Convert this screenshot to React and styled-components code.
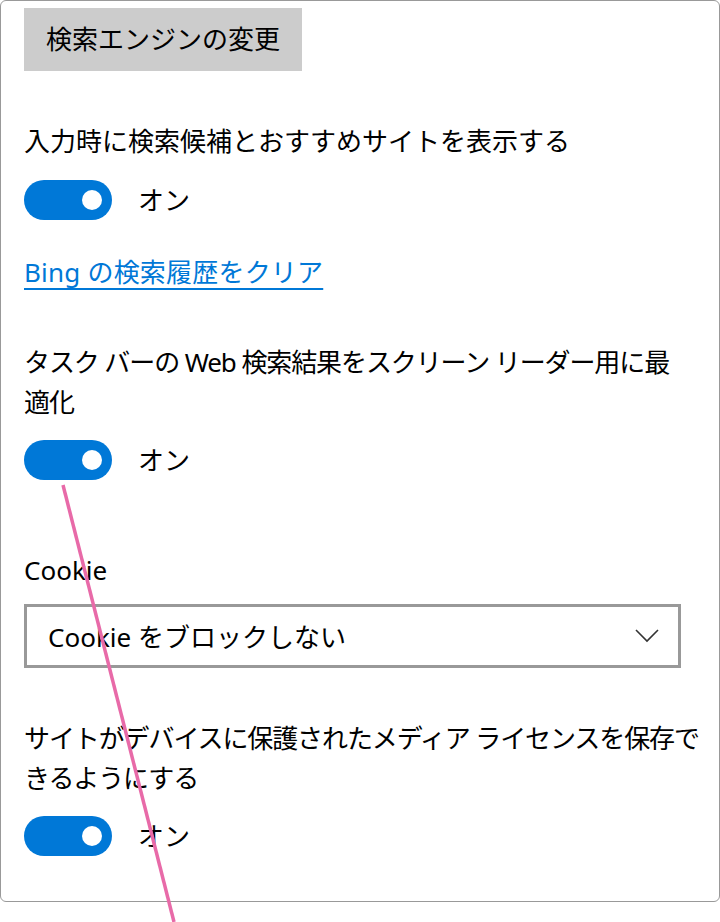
import React from "react";
import styled, { createGlobalStyle } from "styled-components";

const GlobalStyle = createGlobalStyle`
  html, body {
    margin: 0;
    padding: 0;
    background: #fff;
  }
  body {
    font-family: "Noto Sans", "Noto Sans CJK JP", sans-serif;
    color: #000;
  }
`;

const Page = styled.div`
  position: relative;
  width: 720px;
  height: 922px;
  overflow: hidden;
`;

const Panel = styled.div`
  box-sizing: border-box;
  width: 720px;
  height: 902px;
  border: 1px solid #999;
  border-radius: 6px;
  padding: 7px 0 0 23px;
  display: flex;
  flex-direction: column;
  align-items: flex-start;
`;

const GrayButton = styled.button`
  height: 63px;
  padding: 0 22px;
  border: none;
  background: #ccc;
  font-family: "Noto Sans", "Noto Sans CJK JP", sans-serif;
  font-size: 26px;
  color: #000;
  line-height: 63px;
`;

// labels keep the line breaks of the original settings page
const Label = styled.div`
  margin-top: ${(p) => p.$gap}px;
  font-size: 26px;
  line-height: 40px;
  white-space: nowrap;
  letter-spacing: ${(p) => (p.$tight ? "-1.1px" : "0")};
`;

const ToggleRow = styled.div`
  margin-top: ${(p) => p.$gap || 18}px;
  display: flex;
  align-items: center;
  gap: 26px;
  height: 40px;
`;

const Track = styled.div`
  position: relative;
  width: 88px;
  height: 40px;
  border-radius: 20px;
  background: #0078d7;
`;

const Knob = styled.span`
  position: absolute;
  top: 10px;
  right: 10px;
  width: 20px;
  height: 20px;
  border-radius: 50%;
  background: #fff;
`;

const ToggleText = styled.span`
  font-size: 26px;
  line-height: 40px;
`;

const Link = styled.a`
  margin-top: 32px;
  font-size: 26px;
  line-height: 40px;
  color: #0078d7;
  text-decoration: underline;
  text-underline-offset: 6px;
  text-decoration-thickness: 2px;
  letter-spacing: 0.2px;
`;

const Select = styled.div`
  box-sizing: border-box;
  margin-top: 14px;
  width: 657px;
  height: 64px;
  border: 3px solid #999;
  display: flex;
  align-items: center;
  justify-content: space-between;
  padding: 0 19px 0 21px;
  font-size: 26px;
`;

const Overlay = styled.svg`
  position: absolute;
  inset: 0;
  pointer-events: none;
`;

function Toggle({ gap }) {
  return (
    <ToggleRow $gap={gap}>
      <Track>
        <Knob />
      </Track>
      <ToggleText>オン</ToggleText>
    </ToggleRow>
  );
}

export default function App() {
  return (
    <Page>
      <GlobalStyle />
      <Panel>
        <GrayButton>検索エンジンの変更</GrayButton>
        <Label $gap={50}>入力時に検索候補とおすすめサイトを表示する</Label>
        <Toggle gap={19} />
        <Link>Bing の検索履歴をクリア</Link>
        <Label $gap={50} $tight>
          タスク バーの Web 検索結果をスクリーン リーダー用に最
          <br />
          適化
        </Label>
        <Toggle />
        <Label $gap={70}>Cookie</Label>
        <Select>
          <span>Cookie をブロックしない</span>
          <svg width="24" height="14" viewBox="0 0 24 14">
            <path d="M1 1 L12 12 L23 1" fill="none" stroke="#333" strokeWidth="1.6" />
          </svg>
        </Select>
        <Label $gap={50} $tight>
          サイトがデバイスに保護されたメディア ライセンスを保存で
          <br />
          きるようにする
        </Label>
        <Toggle />
      </Panel>
      <Overlay width="720" height="922" viewBox="0 0 720 922">
        <line x1="63" y1="485" x2="174" y2="922" stroke="#e86aa8" strokeWidth="3.5" />
      </Overlay>
    </Page>
  );
}
